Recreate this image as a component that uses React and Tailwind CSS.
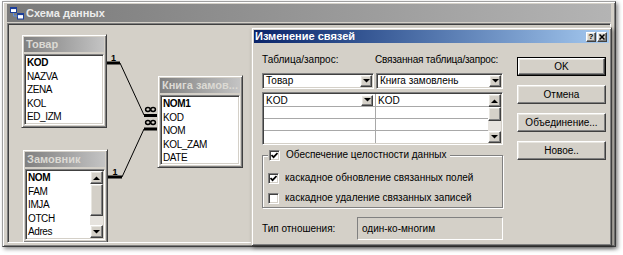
import React from "react";

const raised =
  "border border-t-white border-l-white border-r-[#404040] border-b-[#404040] shadow-[inset_-1px_-1px_0_#808080,inset_1px_1px_0_#e8e6e0]";
const sunken =
  "border border-t-[#808080] border-l-[#808080] border-r-white border-b-white shadow-[inset_1px_1px_0_#404040,inset_-1px_-1px_0_#d4d0c8]";

function Arrow({ up }) {
  return (
    <svg width="7" height="4" viewBox="0 0 7 4">
      {up ? <polygon points="0,4 7,4 3.5,0.5" fill="#000" /> : <polygon points="0,0 7,0 3.5,3.5" fill="#000" />}
    </svg>
  );
}

function ArrowBtn({ up, size }) {
  return (
    <div className={`${size} shrink-0 bg-[#d4d0c8] ${raised} flex items-center justify-center`}>
      <Arrow up={up} />
    </div>
  );
}

function Node({ pos, title, fields, scroll }) {
  return (
    <div
      className={`absolute ${pos} flex flex-col bg-[#d4d0c8] border border-t-[#d4d0c8] border-l-[#d4d0c8] border-r-[#404040] border-b-[#404040] shadow-[inset_1px_1px_0_#ffffff,inset_-1px_-1px_0_#808080] p-[2px]`}
    >
      <div className="h-[15px] shrink-0 bg-linear-to-r from-[#808080] to-[#c4c4c4] pl-[2px] text-[11px] font-bold leading-[15px] text-[#dcdad4] whitespace-nowrap overflow-hidden">
        {title}
      </div>
      <div className={`mt-[2px] flex-1 min-h-0 flex ${sunken} p-[1px] bg-white overflow-hidden`}>
        <div className="flex-1 pl-[1px]">
          {fields.map((f, i) => (
            <div
              key={f}
              className={`h-[13.5px] leading-[13.5px] text-[10px] tracking-[-0.4px] text-black whitespace-nowrap ${i === 0 ? "font-bold" : ""}`}
            >
              {f}
            </div>
          ))}
        </div>
        {scroll && (
          <div className="w-[13px] flex flex-col">
            <ArrowBtn up size="h-[13px] w-[13px]" />
            <div className={`h-[32px] shrink-0 bg-[#d4d0c8] ${raised}`} />
            <div className="flex-1 bg-[#e6e3de]" />
            <ArrowBtn size="h-[13px] w-[13px]" />
          </div>
        )}
      </div>
    </div>
  );
}

function Combo({ text, w }) {
  return (
    <div className={`${w} h-[16px] ${sunken} p-[1px] bg-white flex items-center`}>
      <span className="flex-1 pl-[2px] text-[10px] leading-[12px] whitespace-nowrap overflow-hidden">{text}</span>
      <ArrowBtn size="h-[12px] w-[12px]" />
    </div>
  );
}

function Check({ checked }) {
  return (
    <div className={`w-[11px] h-[11px] shrink-0 bg-white ${sunken} flex items-center justify-center`}>
      {checked && (
        <svg width="7" height="7" viewBox="0 0 7 7">
          <path d="M0.5 3 L2.6 5.2 L6.5 1" stroke="#000" strokeWidth="1.7" fill="none" />
        </svg>
      )}
    </div>
  );
}

function Btn({ children, def }) {
  return (
    <div className={`h-[19px] ${def ? "border border-black" : ""}`}>
      <div className={`h-full bg-[#d4d0c8] ${raised} flex items-center justify-center text-[10px] leading-[12px] text-black`}>
        {children}
      </div>
    </div>
  );
}

function Inf({ cx, cy }) {
  return (
    <g fill="none" stroke="#000" strokeWidth="1.5">
      <ellipse cx={cx - 2.6} cy={cy} rx="2.3" ry="1.9" />
      <ellipse cx={cx + 2.6} cy={cy} rx="2.3" ry="1.9" />
    </g>
  );
}

export default function App() {
  return (
    <div className="relative w-[623px] h-[255px] bg-white overflow-hidden font-['Liberation_Sans',Arial,sans-serif] text-black">
      {/* Main window: Схема данных */}
      <div className="absolute left-[2px] top-[1px] w-[614px] h-[246px] bg-[#d4d0c8] border border-t-[#a0a0a0] border-l-[#a0a0a0] border-r-[#404040] border-b-[#404040] shadow-[inset_1px_1px_0_#ffffff,inset_-1px_-1px_0_#808080,2px_2px_4px_rgba(0,0,0,0.45)] px-[4px] pt-[2px] pb-[3px] flex flex-col">
        <div className="h-[18px] shrink-0 bg-linear-to-r from-[#7a7a7a] to-[#b4b4b4] flex items-center pl-[3px]">
          <svg width="14" height="13" viewBox="0 0 14 13">
            <rect x="0.5" y="0.5" width="6" height="5" fill="#fff" stroke="#1c3f9a" />
            <rect x="0.5" y="0.5" width="6" height="1.6" fill="#1c3f9a" />
            <rect x="7.5" y="6.5" width="6" height="5.5" fill="#fff" stroke="#1c3f9a" />
            <rect x="7.5" y="6.5" width="6" height="1.6" fill="#1c3f9a" />
            <path d="M3.5 6 V9 H7.5" stroke="#5b8ee6" strokeWidth="1" fill="none" />
          </svg>
          <span className="ml-[2px] text-[11px] font-bold leading-[14px] text-[#ececec]">Схема данных</span>
        </div>
        <div className={`relative mt-[1px] flex-1 ${sunken} bg-[#d4d0c8] overflow-hidden`}>
          <svg className="absolute left-[1px] top-[1px]" width="300" height="220">
            <line x1="98" y1="38" x2="111" y2="38" stroke="#000" strokeWidth="3" />
            <line x1="111" y1="38" x2="135" y2="90" stroke="#000" strokeWidth="1" />
            <line x1="135" y1="90.5" x2="148" y2="90.5" stroke="#000" strokeWidth="3" />
            <text x="104.5" y="35.5" fontSize="9" fontWeight="bold" textAnchor="middle" fontFamily="Liberation Sans">1</text>
            <Inf cx={141.5} cy={84.5} />
            <line x1="135" y1="104" x2="148" y2="104" stroke="#000" strokeWidth="3" />
            <Inf cx={141.5} cy={97.5} />
            <line x1="135" y1="104" x2="113" y2="152" stroke="#000" strokeWidth="1" />
            <line x1="99" y1="152" x2="113" y2="152" stroke="#000" strokeWidth="3" />
            <text x="106" y="149.5" fontSize="9" fontWeight="bold" textAnchor="middle" fontFamily="Liberation Sans">1</text>
          </svg>
          <Node pos="left-[13px] top-[10px] w-[86px] h-[94px]" title="Товар" fields={["KOD", "NAZVA", "ZENA", "KOL", "ED_IZM"]} />
          <Node pos="left-[149px] top-[51px] w-[86px] h-[93px]" title="Книга замов..." fields={["NOM1", "KOD", "NOM", "KOL_ZAM", "DATE"]} />
          <Node pos="left-[14px] top-[125px] w-[86px] h-[94px]" title="Замовник" fields={["NOM", "FAM", "IMJA", "OTCH", "Adres"]} scroll />
        </div>
      </div>

      {/* Dialog: Изменение связей */}
      <div className="absolute left-[251px] top-[27px] w-[361px] h-[219px] bg-[#d4d0c8] border border-t-[#d4d0c8] border-l-[#d4d0c8] border-r-[#404040] border-b-[#404040] shadow-[inset_1px_1px_0_#ffffff,inset_-1px_-1px_0_#808080,2px_2px_4px_rgba(0,0,0,0.4)] p-[2px] flex flex-col">
        <div className="h-[13px] shrink-0 bg-linear-to-r from-[#0a246a] to-[#a6caf0] flex items-center justify-between pl-[1px] pr-[2px]">
          <span className="text-[11px] font-bold leading-[13px] text-white">Изменение связей</span>
          <div className="flex gap-[1px]">
            <div className={`w-[10px] h-[10px] bg-[#d4d0c8] ${raised} flex items-center justify-center text-[8px] font-bold leading-[8px]`}>?</div>
            <div className={`w-[10px] h-[10px] bg-[#d4d0c8] ${raised} flex items-center justify-center`}>
              <svg width="6" height="6" viewBox="0 0 6 6">
                <path d="M0.5 0.5 L5.5 5.5 M5.5 0.5 L0.5 5.5" stroke="#000" strokeWidth="1.5" />
              </svg>
            </div>
          </div>
        </div>

        <div className="flex pl-[8px] pt-[11px]">
          {/* left column */}
          <div className="w-[241px] flex flex-col">
            <div className="h-[12px] flex text-[10px] leading-[12px] whitespace-nowrap">
              <span className="w-[113px] shrink-0">Таблица/запрос:</span>
              <span className="tracking-[-0.2px]">Связанная таблица/запрос:</span>
            </div>
            <div className="mt-[7px] flex gap-[2px]">
              <Combo w="w-[112px]" text="Товар" />
              <Combo w="w-[127px]" text="Книга замовлень" />
            </div>
            <div className={`mt-[3px] h-[53px] ${sunken} p-[1px] bg-white flex`}>
              <div className="flex-1 flex flex-col text-[10px] leading-[11px]">
                <div className="h-[13px] flex border-b border-[#a8a8a8]">
                  <div className="w-[112px] border-r border-[#a8a8a8] flex items-center">
                    <span className="flex-1 pl-[2px]">KOD</span>
                    <ArrowBtn size="h-[11px] w-[12px]" />
                    <div className="w-[2px]" />
                  </div>
                  <div className="flex-1 flex items-center pl-[2px]">KOD</div>
                </div>
                <div className="h-[12px] flex border-b border-[#a8a8a8]">
                  <div className="w-[112px] border-r border-[#a8a8a8]" />
                  <div className="flex-1" />
                </div>
                <div className="h-[12px] flex border-b border-[#a8a8a8]">
                  <div className="w-[112px] border-r border-[#a8a8a8]" />
                  <div className="flex-1" />
                </div>
                <div className="h-[12px] flex">
                  <div className="w-[112px] border-r border-[#a8a8a8]" />
                  <div className="flex-1" />
                </div>
              </div>
              <div className="w-[13px] flex flex-col">
                <ArrowBtn up size="h-[13px] w-[13px]" />
                <div className={`h-[14px] shrink-0 bg-[#d4d0c8] ${raised}`} />
                <div className="flex-1 bg-[#e6e3de]" />
                <ArrowBtn size="h-[12px] w-[13px]" />
              </div>
            </div>

            <div className="relative mt-[10px] h-[53px] border border-[#808080] shadow-[inset_1px_1px_0_#ffffff,1px_1px_0_#ffffff]">
              <div className="absolute left-[5px] top-[-8px] h-[14px] flex items-center bg-[#d4d0c8] pl-[1px] pr-[4px]">
                <Check checked />
                <span className="ml-[6px] text-[10px] leading-[12px] whitespace-nowrap">Обеспечение целостности данных</span>
              </div>
              <div className="flex flex-col gap-[6px] pl-[5px] pt-[15px]">
                <div className="h-[14px] flex items-center">
                  <Check checked />
                  <span className="ml-[6px] text-[10px] leading-[12px] whitespace-nowrap">каскадное обновление связанных полей</span>
                </div>
                <div className="h-[14px] flex items-center">
                  <Check />
                  <span className="ml-[6px] text-[10px] leading-[12px] whitespace-nowrap">каскадное удаление связанных записей</span>
                </div>
              </div>
            </div>

            <div className="mt-[9px] h-[23px] flex items-center">
              <span className="w-[95px] shrink-0 text-[10px] leading-[12px]">Тип отношения:</span>
              <div className="flex-1 h-full border border-t-[#808080] border-l-[#808080] border-r-white border-b-white flex items-center pl-[4px] text-[10px] leading-[12px]">
                один-ко-многим
              </div>
            </div>
          </div>

          {/* right column */}
          <div className="ml-[14px] mt-[3px] w-[89px] flex flex-col gap-[9px]">
            <Btn def>OK</Btn>
            <Btn>Отмена</Btn>
            <Btn>Объединение...</Btn>
            <Btn>Новое..</Btn>
          </div>
        </div>
      </div>
    </div>
  );
}
